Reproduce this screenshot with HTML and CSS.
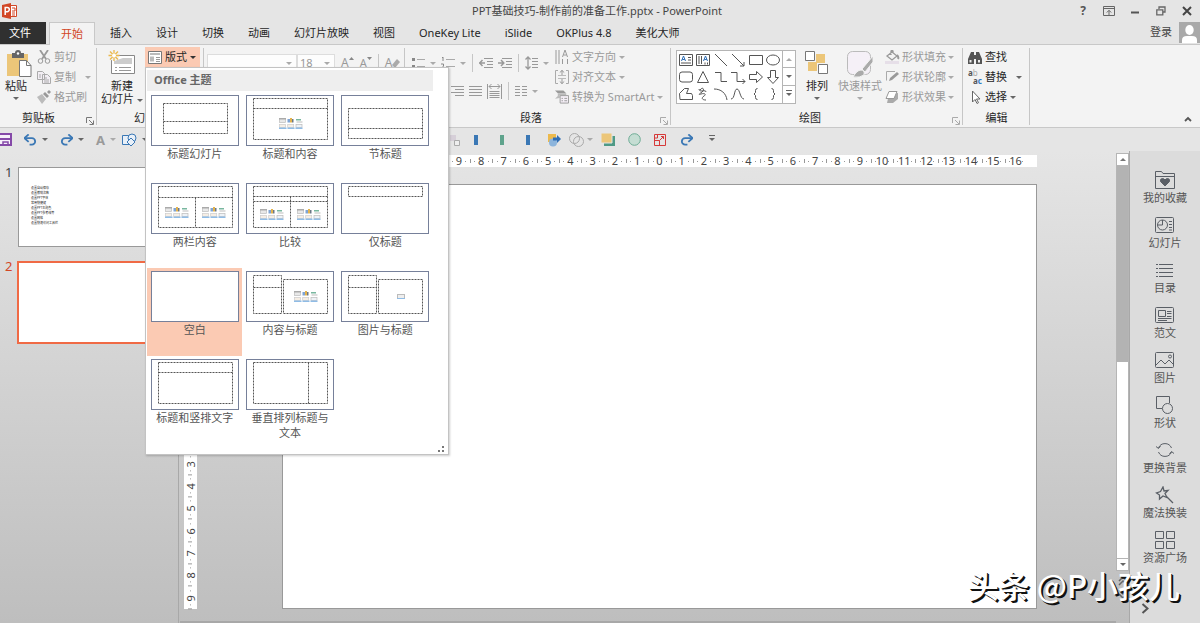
FILE: index.html
```html
<!DOCTYPE html>
<html lang="zh-CN">
<head>
<meta charset="utf-8">
<title>PPT基础技巧-制作前的准备工作.pptx - PowerPoint</title>
<link rel="stylesheet" href="styles.css">
</head>
<body>
<svg class="defs" aria-hidden="true">
  <symbol id="media" viewBox="0 0 24 11">
    <rect x=".5" y=".5" width="6" height="4" fill="#e8e8e8" stroke="#bbb" stroke-width=".7"/><rect x="0" y="0" width="7" height="1.500" fill="#aaa"/>
    <rect x="8.500" y="1" width="2.500" height="3.500" fill="#7fa4d4"/><rect x="11" y="0" width="2" height="4.500" fill="#e3b34d"/><rect x="13" y="1" width="1.500" height="3.500" fill="#6b7686"/>
    <rect x="17" y="1" width="5" height="1.500" fill="#79b79f"/><rect x="17.500" y="3.500" width="6" height="1" fill="#bbb"/>
    <rect x=".5" y="6.500" width="6" height="3" fill="#f6eee4" stroke="#ccc" stroke-width=".7"/><rect y="9.500" width="7.500" height="1.500" fill="#8fbce6"/>
    <rect x="8.700" y="6.500" width="6" height="3" fill="#f6eee4" stroke="#ccc" stroke-width=".7"/><rect x="8.500" y="9.500" width="7" height="1.500" fill="#8fbce6"/>
    <rect x="17" y="6.500" width="6" height="3" fill="#eef2f6" stroke="#bbb" stroke-width=".7"/><rect x="16.500" y="9.500" width="7" height="1.500" fill="#8fbce6"/>
  </symbol>
  <symbol id="launch" viewBox="0 0 8 8"><path d="M.5 6V.5H6M3 3l4 4M7.500 3.500v4h-4" fill="none" stroke="currentColor"/></symbol>
  <symbol id="redo" viewBox="0 0 14 12"><path d="M13 4H5.500a3.500 3.500 0 0 0 0 7H8" fill="none" stroke="#3b78b5" stroke-width="2"/><path d="M9 0l4.500 4L9 8" fill="none" stroke="#3b78b5" stroke-width="2"/></symbol>
</svg>

<header class="titlebar">
  <svg class="logo" width="16" height="16" viewBox="0 0 16 16"><path d="M8 2.500h6.500v11H8z" fill="#fff" stroke="#d24726"/><path d="M10 5h3v3h-3M10 10h3M10 12h3" stroke="#d24726" fill="none"/><path d="M0 2l9-2v16l-9-2z" fill="#d24726"/><path d="M3.200 12V4.500h2a2 2 0 0 1 0 4.200h-2" fill="none" stroke="#fff" stroke-width="1.500"/></svg>
  <h1>PPT基础技巧-制作前的准备工作.pptx - PowerPoint</h1>
  <div class="window-buttons">
    <button class="help" aria-label="帮助">?</button>
    <button aria-label="功能区显示选项"><svg width="12" height="10" viewBox="0 0 12 10"><path d="M.5.5h11v9H.5zM.5 2.500h11M6 9V4.500M3.800 6.500L6 4.300l2.200 2.200" fill="none" stroke="#666"/></svg></button>
    <button aria-label="最小化"><svg width="10" height="10" viewBox="0 0 10 10"><path d="M1 6.500h8" stroke="#555" stroke-width="2"/></svg></button>
    <button aria-label="还原"><svg width="10" height="10" viewBox="0 0 10 10"><path d="M3 3V1h6v5H7M.8 3.800h6v5h-6z" fill="none" stroke="#666" stroke-width="1.300"/></svg></button>
    <button aria-label="关闭"><svg width="10" height="10" viewBox="0 0 10 10"><path d="M1 1l8 8M9 1L1 9" stroke="#444" stroke-width="2"/></svg></button>
  </div>
</header>

<nav class="tabs">
  <button class="file">文件</button>
  <button class="active">开始</button>
  <button>插入</button><button>设计</button><button>切换</button><button>动画</button><button>幻灯片放映</button><button>视图</button><button>OneKey Lite</button><button>iSlide</button><button>OKPlus 4.8</button><button>美化大师</button>
  <a class="login" href="#">登录</a>
  <svg class="avatar" width="21" height="21" viewBox="0 0 21 21"><path d="M0 0h21v21H0z" fill="#a9a9a9"/><ellipse cx="10.500" cy="8" rx="4.200" ry="5" fill="#fff"/><path d="M3 21v-3q0-4 5-4h5q5 0 5 4v3z" fill="#fff"/></svg>
</nav>

<section class="ribbon">
  <div class="group clipboard">
    <div class="body">
      <button class="big paste"><svg width="28" height="29" viewBox="0 0 28 29"><path d="M1 4h21v22H1z" fill="#ecc679"/><path d="M6 3h3a3 3 0 0 1 6 0h3v5H6z" fill="#666"/><circle cx="12" cy="3.500" r="1.200" fill="#fff"/><path d="M13.500 10.500h7l4.500 5v11H13.500z" fill="#fff" stroke="#777"/><path d="M20.500 10.500v5H25" fill="none" stroke="#777"/></svg><span>粘贴</span><i class="caret"></i></button>
      <div class="rows off">
        <button><svg width="14" height="14" viewBox="0 0 14 14" fill="none" stroke="#999"><path d="M3 0l6 9M11 0L5 9" stroke-width="1.800"/><circle cx="3.500" cy="11" r="2.300"/><circle cx="10.500" cy="11" r="2.300"/></svg>剪切</button>
        <button><svg width="14" height="14" viewBox="0 0 14 14" fill="#f2eef4" stroke="#aaa"><path d="M.5 1.500h5l2 2v6h-7zM5.500 4.500h5l3 3v6h-8z"/><path d="M2 5h2M2 7h2M7 8h3M7 10h5M7 12h5"/></svg>复制<i class="caret far"></i></button>
        <button><svg width="14" height="14" viewBox="0 0 14 14"><path d="M0 7l5-3 4 5-4 5z" fill="#bbb"/><path d="M6 4l2-2 4 4-2 2zM10 2l2-2 2 2-2 2z" fill="#999"/></svg>格式刷</button>
      </div>
    </div>
    <footer>剪贴板<button aria-label="剪贴板选项"><svg width="8" height="8"><use href="#launch"/></svg></button></footer>
  </div>

  <div class="group slides">
    <div class="body">
      <button class="big new"><svg width="28" height="26" viewBox="0 0 28 26"><path d="M3.500 5.500h23v18h-23z" fill="#fff" stroke="#888"/><path d="M15 8h9v6H6v-3" fill="#ccc"/><path d="M7 17.500h2M11 17.500h12M7 20.500h2M11 20.500h12" stroke="#999"/><circle cx="6" cy="6" r="5" fill="#f2f2f2"/><path d="M6 0v11M.5 5.500h11M2 1.500l8 8M10 1.500l-8 8" stroke="#ecb94c" stroke-width="1.300"/><circle cx="6" cy="5.500" r="2" fill="#fff"/></svg><span>新建<br>幻灯片 <i class="caret"></i></span></button>
      <button class="layout-button" aria-expanded="true"><svg width="14" height="13" viewBox="0 0 14 13"><path d="M.5.5h13v12H.5z" fill="#fff" stroke="#777"/><path d="M2 2h10v2H2zM2 5.500h4v5H2z" fill="#bbb"/><path d="M8 6.500h4M8 8.500h4M8 10.500h4" stroke="#999"/></svg>版式<i class="caret"></i></button>
    </div>
    <footer>幻灯片</footer>
  </div>

  <div class="group font">
    <div class="tools off">
      <span class="combo name"><select aria-label="字体"><option></option></select><i class="caret"></i></span><span class="combo size"><select aria-label="字号"><option>18</option></select><i class="caret"></i></span>
      <button aria-label="增大字号">A<svg width="5" height="14" viewBox="0 0 5 14"><path d="M0 4l2.500-3L5 4z" fill="#888"/></svg></button>
      <button class="less" aria-label="减小字号">A<svg width="5" height="14" viewBox="0 0 5 14"><path d="M0 1l2.500 3L5 1z" fill="#888"/></svg></button>
      <i class="rule"></i>
      <button class="clear" aria-label="清除格式">A<svg width="8" height="12" viewBox="0 0 8 12"><path d="M0 8l5-6 3 3-5 6z" fill="#aaa"/></svg></button>
    </div>
  </div>

  <div class="group paragraph">
    <div class="body">
      <div class="para-tools off">
        <div class="tools">
          <button aria-label="项目符号"><svg width="13" height="11" viewBox="0 0 13 11" stroke="#aaa"><path d="M0 1.500h3M0 8.500h3" stroke="#888" stroke-width="3"/><path d="M5 1.500h8M5 8.500h8"/></svg></button><i class="caret"></i>
          <button aria-label="编号"><svg width="14" height="13" viewBox="0 0 14 13" stroke="#aaa"><path d="M1 1l1-1v4M0 7h2.500v2L.5 11.500H3" fill="none" stroke="#888"/><path d="M5 2.500h9M5 9.500h9"/></svg></button><i class="caret"></i>
          <i class="rule"></i>
          <button aria-label="减少缩进"><svg width="14" height="11" viewBox="0 0 14 11" fill="none" stroke="#999"><path d="M0 5h6M3.500 2L.7 5l2.800 3" stroke-width="1.500"/><path d="M5 .5h9M8 3.500h6M8 6.500h6M5 9.500h9"/></svg></button>
          <button aria-label="增加缩进"><svg width="14" height="11" viewBox="0 0 14 11" fill="none" stroke="#999"><path d="M0 5h6M3 2l2.800 3L3 8" stroke-width="1.500"/><path d="M4 .5h10M8 3.500h6M8 6.500h6M4 9.500h10"/></svg></button>
          <i class="rule"></i>
          <button aria-label="行距"><svg width="13" height="14" viewBox="0 0 13 14" fill="none" stroke="#999"><path d="M3 1v12M.5 3.500L3 1l2.500 2.500M.5 10.500L3 13l2.500-2.500" stroke-width="1.300"/><path d="M7 2.500h6M7 5.500h6M7 8.500h6M7 11.500h6"/></svg></button><i class="caret"></i>
        </div>
        <div class="tools second">
          <button aria-label="右对齐"><svg width="14" height="11" viewBox="0 0 14 11" stroke="#999"><path d="M1 .5h13M5 3.500h9M1 6.500h13M5 9.500h9"/></svg></button>
          <button aria-label="两端对齐"><svg width="13" height="11" viewBox="0 0 13 11" stroke="#999"><path d="M0 .5h13M0 3.500h13M0 6.500h13M0 9.500h13"/></svg></button>
          <button aria-label="分散对齐"><svg width="15" height="15" viewBox="0 0 15 15" fill="none" stroke="#999"><path d="M.5 0v15M14.500 0v15M2 2.500h11M4.500 0L2 2.500 4.500 5M10.500 0L13 2.500 10.500 5M2.500 7.500h10M2.500 9.500h10M2.500 11.500h10M2.500 13.500h10"/></svg></button>
          <i class="rule"></i>
          <button aria-label="分栏"><svg width="12" height="11" viewBox="0 0 12 11" stroke="#999"><path d="M0 .5h5M0 3.500h5M0 6.500h5M0 9.500h5M7 .5h5M7 3.500h5M7 6.500h5M7 9.500h5"/></svg></button><i class="caret"></i>
        </div>
      </div>
      <div class="rows off">
        <button><svg width="14" height="14" viewBox="0 0 14 14" fill="none" stroke="#999"><path d="M1 0v14M4 0v14M7.500 9v5M12.500 9v5M7.500 7l2.500-7 2.500 7M8.500 5h3"/></svg>文字方向<i class="caret"></i></button>
        <button><svg width="14" height="14" viewBox="0 0 14 14" fill="none" stroke="#999"><path d="M3 .5H.5v13H3M11 .5h2.500v13H11" stroke="#aaa"/><path d="M3 5.500h8M3 8.500h8" stroke="#bbb"/><path d="M7 0v5M4.800 2.500L7 .5l2.200 2M7 9v5M4.800 11.500l2.200 2 2.200-2"/></svg>对齐文本<i class="caret"></i></button>
        <button><svg width="14" height="14" viewBox="0 0 15 14"><path d="M0 0h9l3 3H3z" fill="#999"/><path d="M3 3h9v2H5v3L0 9l3-3z" fill="#bbb"/><path d="M5.500 5.500h9v8h-9z" fill="#f5eff7" stroke="#999"/><path d="M7 8.500h1.500M10 8.500h3M7 11h1.500M10 11h3" stroke="#999"/></svg>转换为 SmartArt<i class="caret"></i></button>
      </div>
    </div>
    <footer>段落<button class="off" aria-label="段落选项"><svg width="8" height="8"><use href="#launch"/></svg></button></footer>
  </div>

  <div class="group drawing">
    <div class="body">
      <div class="gallery">
        <div class="shapes">
          <svg viewBox="0 0 16 16"><path d="M1.500 2.500h13v11h-13zM10 5.500h3M10 8h3M3 11h10"/><path d="M3.500 9l2-5 2 5M4.300 7.500h2.500" stroke="#2f6eb5"/></svg>
          <svg viewBox="0 0 16 16"><path d="M1.500 2.500h13v11h-13zM4 4v8M6.500 4v8M10 10.500v2M12.500 10.500v2"/><path d="M8.500 9l2-5 2 5M9.300 7.500h2.500" stroke="#2f6eb5"/></svg>
          <svg viewBox="0 0 16 16"><path d="M2 2l12 12"/></svg>
          <svg viewBox="0 0 16 16"><path d="M2 2l12 12M14 10v4h-4"/></svg>
          <svg viewBox="0 0 16 16"><path d="M1.500 3.500h13v9h-13z"/></svg>
          <svg viewBox="0 0 16 16"><ellipse cx="8" cy="8" rx="6.500" ry="5"/></svg>
          <svg viewBox="0 0 16 16"><rect x="1.500" y="3" width="13" height="10" rx="2.500"/></svg>
          <svg viewBox="0 0 16 16"><path d="M8 2.500l5.500 11h-11z"/></svg>
          <svg viewBox="0 0 16 16"><path d="M2 3.500h6v9h6"/></svg>
          <svg viewBox="0 0 16 16"><path d="M1 3.500h6v9h8M12.500 10l2.500 2.500-2.500 2.500"/></svg>
          <svg viewBox="0 0 16 16"><path d="M1.500 5.500h7v-3L14.500 8l-6 5.500v-3h-7z"/></svg>
          <svg viewBox="0 0 16 16"><path d="M5.500 1.500v7h-3L8 14.500l5.500-6h-3v-7z"/></svg>
          <svg viewBox="0 0 16 16"><path d="M2 13.500l-.5-6 5-5h4l-2 5h5l1 2v4z"/></svg>
          <svg viewBox="0 0 16 16"><path d="M5 4c3-4 5 0 2 2S3 9 6 8s6 0 3 2-2 4 2 4M4 3c0 4 7 0 7 3"/></svg>
          <svg viewBox="0 0 16 16"><path d="M1 3c7 0 12 4 13 11"/></svg>
          <svg viewBox="0 0 16 16"><path d="M1 13C5 13 4 3 7 3s3 10 7 10"/></svg>
          <svg viewBox="0 0 16 16"><path d="M9.500 2.500q-2 0-2 2v2L6 8l1.500 1.500v2q0 2 2 2"/></svg>
          <svg viewBox="0 0 16 16"><path d="M6.500 2.500q2 0 2 2v2L10 8 8.500 9.500v2q0 2-2 2"/></svg>
        </div>
        <div class="gallery-nav">
          <button aria-label="上一行"><i class="caret up pale"></i></button>
          <button aria-label="下一行"><i class="caret"></i></button>
          <button aria-label="更多"><i class="caret more"></i></button>
        </div>
      </div>
      <button class="big arrange"><svg width="26" height="26" viewBox="0 0 26 26"><path d="M12 4h9v9h-9zM4 12h9v9H4z" fill="#ecc679"/><path d="M1.500 1.500h9v9h-9zM14.500 14.500h9v9h-9z" fill="#fff" stroke="#777"/></svg><span>排列</span><i class="caret"></i></button>
      <button class="big styles off"><svg width="28" height="28" viewBox="0 0 28 28"><rect x="1.500" y="1.500" width="23" height="23" rx="5" fill="#f5f0f7" stroke="#bbb"/><path d="M27 6v6l-8 10-3-3z" fill="#aaa" stroke="#f3f3f3"/><path d="M7 27q4-7 8-7t3 5q-4 3-11 2z" fill="#aaa" stroke="#f3f3f3"/></svg><span>快速样式</span><i class="caret"></i></button>
      <div class="rows off">
        <button><svg width="15" height="14" viewBox="0 0 15 14" fill="none" stroke="#999"><path d="M0 11h14v3H0z" fill="#e6dfe8" stroke="none"/><path d="M2 6l5-4 5 4-5 4zM6 5V1q1-1 2 0v3" stroke-width="1.300"/><path d="M12 5q2 2 1 4" stroke-width="2"/></svg>形状填充<i class="caret"></i></button>
        <button><svg width="15" height="14" viewBox="0 0 15 14" fill="none" stroke="#aaa"><path d="M10 1.500H1.500v9"/><path d="M4 11l1-3 7-6 2 2-7 6z" fill="#999" stroke="none"/></svg>形状轮廓<i class="caret"></i></button>
        <button><svg width="15" height="14" viewBox="0 0 15 14"><path d="M4 4l9-1v6l-5 4H2z" fill="#aaa"/><path d="M4 1.500h8l-3 7H1z" fill="#fff" stroke="#999" stroke-linejoin="round"/></svg>形状效果<i class="caret"></i></button>
      </div>
    </div>
    <footer>绘图<button class="off" aria-label="绘图选项"><svg width="8" height="8"><use href="#launch"/></svg></button></footer>
  </div>

  <div class="group editing">
    <div class="body">
      <div class="rows">
        <button><svg width="14" height="13" viewBox="0 0 14 13" fill="#555"><path d="M3 1h3v12H0V8zM8 1h3l3 7v5H8zM6 4h2v4H6z"/><path d="M1.500 9h2v2.500h-2zM10 9h2v2.500h-2z" fill="#eee"/></svg>查找</button>
        <button><span class="replace-icon" aria-hidden="true"><span><b>a</b><i>b</i></span><span><b>a</b><em>c</em></span></span>替换<i class="caret far"></i></button>
        <button><svg width="14" height="14" viewBox="0 0 14 14"><path d="M4.500 1v11l2.500-2.500 2 4 1.500-.8-2-3.700H12z" fill="#fff" stroke="#666"/></svg>选择<i class="caret"></i></button>
      </div>
    </div>
    <footer>编辑</footer>
  </div>
  <button class="collapse" aria-label="折叠功能区"><svg width="8" height="6" viewBox="0 0 8 6"><path d="M1 5l3-3 3 3" fill="none" stroke="#555" stroke-width="1.800"/></svg></button>
</section>

<section class="quickbar">
  <div class="quick-start">
    <button aria-label="保存"><svg width="12" height="13" viewBox="0 0 12 13"><path d="M0 1h11v11H0" fill="#f6effa" stroke="#8549a8" stroke-width="2"/><path d="M0 6h10" stroke="#8549a8" stroke-width="2"/><path d="M3 12V9h5v3" fill="none" stroke="#8549a8" stroke-width="1.500"/></svg></button>
    <button aria-label="撤消"><svg class="flip" width="13" height="12"><use href="#redo"/></svg><i class="caret"></i></button>
    <button aria-label="恢复"><svg width="13" height="12"><use href="#redo"/></svg><i class="caret"></i></button>
    <button class="letter off" aria-label="字体颜色">A<i class="caret"></i></button>
    <button aria-label="形状"><svg width="15" height="14" viewBox="0 0 15 14" fill="#e9f0f8" stroke="#3b78b5"><path d="M.5 2.500h9v9h-9z"/><circle cx="10" cy="5" r="4"/><path d="M9 5l4 4-4 4-4-4z"/></svg><i class="caret"></i></button>
  </div>
  <div class="quick-more">
    <button aria-label="组合"><svg width="14" height="14" viewBox="0 0 14 14"><path d="M1 2h6v6H1z" fill="#d6cfd8"/><path d="M5.500 7.500h5v5h-5z" fill="#eee" stroke="#aaa"/></svg></button>
    <button aria-label="左对齐"><i class="bar"></i></button>
    <button aria-label="居中"><i class="bar green"></i></button>
    <button aria-label="右侧对齐"><i class="bar"></i></button>
    <button aria-label="替换形状"><svg width="14" height="14" viewBox="0 0 14 14"><path d="M1 1h8v8H1z" fill="#ecb94c"/><circle cx="6" cy="9.500" r="4" fill="#8db5dc"/><path d="M6 4.500h4V2l4 4-4 4V7.500H6z" fill="#2f6eb5"/></svg></button>
    <button class="wide" aria-label="合并形状"><svg width="15" height="14" viewBox="0 0 15 14" fill="none" stroke="#aaa"><circle cx="5.500" cy="5.500" r="5"/><circle cx="9.500" cy="8.500" r="5"/></svg><i class="caret pale"></i></button>
    <button aria-label="置底"><svg width="14" height="13" viewBox="0 0 14 13"><path d="M3 3h11v10H3z" fill="#4f9a86"/><path d="M0 0h11v10H0z" fill="#ecc679" stroke="#e5e5e5"/></svg></button>
    <button aria-label="圆"><svg width="13" height="13" viewBox="0 0 13 13"><circle cx="6.500" cy="6.500" r="5.800" fill="#c5ddd3" stroke="#6dac95"/></svg></button>
    <button aria-label="选择窗格"><svg width="12" height="12" viewBox="0 0 12 12" fill="none" stroke="#d63a3a"><path d="M.5.500h11v11H.5z"/><path d="M.5 6.500h5v5M3.500 1v3H1M5.500 6.500l4-4M7 2.500h2.500V5"/></svg></button>
    <button aria-label="重复"><svg width="13" height="12"><use href="#redo"/></svg></button>
    <button aria-label="自定义快速访问工具栏"><i class="caret more"></i></button>
  </div>
</section>

<main class="workspace">
  <aside class="slides-pane">
    <div class="slide-row"><span>1</span><div class="slide"><p>设置自动保存<br>设置撤销次数<br>设置PPT字体<br>常用快捷键<br>设置PPT主题色<br>设置PPT参考线等<br>设置网格<br>设置快速访问工具栏</p></div></div>
    <div class="slide-row current"><span>2</span><div class="slide"></div></div>
  </aside>

  <section class="editor">
    <div class="h-ruler"><span></span><span></span><span></span><span></span><span></span><span></span><span></span><span>9</span><span>8</span><span>7</span><span>6</span><span>5</span><span>4</span><span>3</span><span>2</span><span>1</span><span>0</span><span>1</span><span>2</span><span>3</span><span>4</span><span>5</span><span>6</span><span>7</span><span>8</span><span>9</span><span>10</span><span>11</span><span>12</span><span>13</span><span>14</span><span>15</span><span>16</span></div>
    <div class="v-ruler"><span></span><span></span><span></span><span></span><span></span><span></span><span></span><span></span><span></span><span></span><span></span><span></span><span>3</span><span>4</span><span>5</span><span>6</span><span>7</span><span>8</span><span>9</span></div>
    <div class="page"></div>
  </section>

  <div class="scroll">
    <button aria-label="向上滚动"><i class="caret up"></i></button>
    <div class="track"><div class="thumb"></div></div>
    <button aria-label="向下滚动"><i class="caret"></i></button>
    <div class="jump"><svg width="10" height="22" viewBox="0 0 10 22"><path d="M1 5l4-4 4 4M1 9l4-4 4 4M1 14l4 4 4-4M1 18l4 4 4-4" fill="none" stroke="#666" stroke-width="1.500"/></svg></div>
  </div>

  <aside class="tools-pane">
    <button><svg viewBox="0 0 20 18"><path d="M.5 17.500V.5h6l1.500 2h11.500v15zM.5 5.500h19"/><path d="M10 15L5.500 10.500Q5 7.500 7.500 7.500 9 7.500 10 9q1-1.500 2.500-1.500 2.500 0 2 3z" fill="#5a5f66"/></svg>我的收藏</button>
    <button><svg viewBox="0 0 20 18"><rect x=".5" y="1.500" width="18" height="15" rx="1"/><circle cx="7.500" cy="9" r="5"/><path d="M7.500 4v5h-5M14 5.500h3M14 8.500h3M14 11.500h3M14 14h3"/></svg>幻灯片</button>
    <button><svg viewBox="0 0 20 18"><path d="M4 3.500h14M4 7.500h14M4 11.500h14M4 15.500h14M1 3.500h2M1 7.500h2M1 11.500h2M1 15.500h2"/></svg>目录</button>
    <button><svg viewBox="0 0 20 18"><rect x=".5" y="1.500" width="18" height="15" rx="1"/><path d="M3.500 4.500h7v6h-7zM12 5.500h4.500M12 7.500h4.500M12 10.500h4.500M3 12.500h13.500M3 14.500h9"/></svg>范文</button>
    <button><svg viewBox="0 0 20 18"><rect x=".5" y="1.500" width="18" height="15" rx="1"/><path d="M1 14l5-5 4 4 4-4 5 5"/><circle cx="15" cy="5.500" r="1.500"/></svg>图片</button>
    <button><svg viewBox="0 0 20 18"><path d="M7 12.500H1.500V.5h13V7"/><circle cx="12.500" cy="12.500" r="5"/></svg>形状</button>
    <button><svg viewBox="0 0 20 18"><path d="M3.500 7a7 7 0 0 1 13 0M3.500 11a7 7 0 0 0 13 0M1 5.500l2.500 2 2-2.500M19 12.500l-2.500-2-2 2.500"/></svg>更换背景</button>
    <button><svg viewBox="0 0 20 18"><path d="M8 1l1 4 4-.5-3 3 2 4-4-1.500-3.500 3V9L1.500 7l4-1.500zM11.500 10.500l6.500 6.500" stroke-width="1.300"/></svg>魔法换装</button>
    <button><svg viewBox="0 0 20 18"><path d="M.5.500h8v7h-8zM11.500.500h8v7h-8zM.5 10.500h8v7h-8zM11.500 10.500h8v7h-8z"/></svg>资源广场</button>
    <svg class="next" width="8" height="11" viewBox="0 0 8 11"><path d="M1.500 1l5 4.500-5 4.500" fill="none" stroke="#555" stroke-width="2"/></svg>
  </aside>
</main>

<div class="layout-menu" role="menu">
  <h2>Office 主题</h2>
  <div class="layouts">
    <button><svg viewBox="0 0 88 51"><path d="M12.500 8.500h64v30h-64zM12.500 26.500h64"/></svg>标题幻灯片</button>
    <button><svg viewBox="0 0 88 51"><path d="M7.500 3.500h74v41h-74zM7.500 13.500h74"/><use href="#media" x="33" y="23" width="24" height="11"/></svg>标题和内容</button>
    <button><svg viewBox="0 0 88 51"><path d="M7.500 13.500h74v30h-74zM7.500 33.500h74"/></svg>节标题</button>
    <button><svg viewBox="0 0 88 51"><path d="M7.500 3.500h74v41h-74zM7.500 14.500h74M44.500 14.500v30"/><use href="#media" x="14" y="24" width="24" height="11"/><use href="#media" x="51" y="24" width="24" height="11"/></svg>两栏内容</button>
    <button><svg viewBox="0 0 88 51"><path d="M7.500 3.500h74v41h-74zM7.500 13.500h74M7.500 18.500h74M44.500 13.500v31"/><use href="#media" x="14" y="26" width="24" height="11"/><use href="#media" x="51" y="26" width="24" height="11"/></svg>比较</button>
    <button><svg viewBox="0 0 88 51"><path d="M7.500 3.500h74v10h-74z"/></svg>仅标题</button>
    <button class="selected"><svg viewBox="0 0 88 51"></svg>空白</button>
    <button><svg viewBox="0 0 88 51"><path d="M7.500 4.500h28v38h-28zM7.500 16.500h28M37.500 8.500h44v34h-44z"/><use href="#media" x="48" y="20" width="24" height="11"/></svg>内容与标题</button>
    <button><svg viewBox="0 0 88 51"><path d="M7.500 4.500h28v38h-28zM7.500 16.500h28M37.500 8.500h44v34h-44z"/><g><rect x="56.500" y="23.500" width="7" height="4" fill="#eee" stroke="#bbb"/><rect x="56" y="27" width="8" height="1" fill="#8fbce6"/></g></svg>图片与标题</button>
    <button><svg viewBox="0 0 88 51"><path d="M7.500 3.500h74v41h-74zM7.500 13.500h74"/></svg>标题和竖排文字</button>
    <button><svg viewBox="0 0 88 51"><path d="M7.500 3.500h74v41h-74zM62.500 3.500v41"/></svg>垂直排列标题与文本</button>
  </div>
  <svg class="grip" width="6" height="6" viewBox="0 0 6 6"><path d="M4 0h2v2H4zM0 4h2v2H0zM4 4h2v2H4z" fill="#777"/></svg>
</div>

<div class="watermark">头条 @P小孩儿</div>
</body>
</html>
```

FILE: styles.css
```css
* { box-sizing: border-box; }

body {
  margin: 0;
  min-height: 100vh;
  display: flex;
  flex-direction: column;
  position: relative;
  background: #e5e5e5;
  color: #262626;
  font: 11px/14px "Noto Sans", "Noto Sans CJK SC", sans-serif;
}

button {
  border: 0;
  padding: 0;
  background: none;
  color: inherit;
  font: inherit;
  white-space: nowrap;
}

svg { flex: none; }
.defs { position: absolute; width: 0; height: 0; }
.off { color: #9a9a9a; }
.flip { transform: scaleX(-1); }

.caret {
  flex: none;
  display: inline-block;
  border: 3px solid transparent;
  border-top-color: #666;
  border-bottom: 0;
  vertical-align: middle;
}
.off .caret, .caret.pale { border-top-color: #aaa; }
.caret.up { border-top: 0; border-bottom: 3px solid #777; }
.caret.up.pale { border-bottom-color: #aaa; }
.caret.more { position: relative; }
.caret.more::before {
  content: "";
  position: absolute;
  left: -3px;
  top: -6px;
  width: 6px;
  height: 1px;
  background: #666;
}

/* Title bar */
.titlebar {
  height: 22px;
  display: grid;
  grid-template-columns: 1fr auto 1fr;
  align-items: center;
  padding-left: 2px;
}
h1 { margin: 0; padding-right: 8px; font-size: 11px; font-weight: 400; color: #444; }
.window-buttons { display: flex; justify-content: flex-end; }
.window-buttons button { width: 26px; height: 20px; display: grid; place-items: center; }
.window-buttons .help { font-size: 12px; font-weight: 700; color: #555; }

/* Tabs */
.tabs { display: flex; height: 22px; }
.tabs button { padding: 0 12px; }
.tabs .file { width: 46px; margin-right: 3px; padding: 0 6px 0 0; background: #303030; color: #fff; }
.tabs .active {
  z-index: 1;
  margin: 0 3px -1px 0;
  height: 23px;
  padding: 0 11px;
  border: 1px solid #c8c8c8;
  border-bottom: 0;
  background: #f3f3f3;
  color: #d24726;
}
.login { margin: 3px 7px 0 auto; color: #444; text-decoration: none; }

/* Ribbon */
.ribbon {
  display: flex;
  height: 84px;
  border: solid #c8c8c8;
  border-width: 1px 0;
  background: #f3f3f3;
}
.group { flex: none; display: flex; flex-direction: column; position: relative; padding: 2px 0; }
.group::after {
  content: "";
  position: absolute;
  right: 0;
  top: 3px;
  bottom: 2px;
  width: 1px;
  background: #c6c6c6;
}
.body { flex: 1; display: flex; align-items: flex-start; }
.group footer { position: relative; height: 14px; text-align: center; }
.group footer button { position: absolute; right: 3px; bottom: 0; height: 8px; display: flex; color: #777; }
.group footer button.off { color: #aaa; }

.clipboard { width: 97px; }
.clipboard footer { padding-right: 20px; }
.slides { width: 107px; }
.font { width: 201px; }
.paragraph { width: 266px; }
.drawing { width: 292px; }
.paragraph footer, .drawing footer { padding-right: 14px; }
.editing { width: 67px; }

.big { display: flex; flex-direction: column; align-items: center; padding-top: 3px; }
.big span { line-height: 13px; }
.big > .caret { margin-top: 5px; }
.paste { width: 37px; }
.paste svg { margin-left: 2px; }
.paste span, .paste .caret { margin-right: 5px; }
.new { width: 48px; padding-left: 2px; }
.new span { margin-top: 3px; }
.layout-button { display: flex; align-items: center; gap: 3px; height: 20px; width: 55px; padding-left: 3px; background: #fbcab3; }
.layout-button .caret { border-top-color: #333; }

.rows { display: grid; grid-auto-rows: 20px; }
.rows button { display: flex; align-items: center; gap: 3px; }
.rows .far { margin-left: 6px; }

.tools { display: flex; align-items: center; height: 32px; }
.tools button { display: flex; align-items: center; }
.rule { flex: none; width: 1px; height: 18px; background: #c6c6c6; }
.font .tools { gap: 6px; padding-left: 3px; }
.combo { flex: none; display: flex; align-items: center; height: 18px; padding-right: 4px; border: 1px solid #ddd; background: #fdfdfd; }
.combo.name { width: 90px; margin-right: -6px; }
.combo.size { width: 38px; }
.combo select { flex: 1; min-width: 0; appearance: none; border: 0; padding: 0 2px; background: none; color: #999; font: inherit; }
.tools button { font-size: 12px; }
.tools .less { font-size: 11px; }

.para-tools { width: 150px; }
.para-tools .tools { gap: 5px; padding-left: 7px; }
.para-tools .rule { margin: 0 1px; }
.para-tools .second { height: 24px; padding-left: 45px; }

.drawing .body { padding-left: 5px; }
.gallery { display: flex; width: 120px; height: 54px; margin-top: 3px; border: 1px solid #b5b5b5; background: #fff; }
.shapes { flex: 1; display: grid; grid-template: repeat(3, 1fr) / repeat(6, 1fr); place-items: center; }
.shapes svg { width: 16px; height: 16px; fill: none; stroke: #555; }
.gallery-nav { width: 13px; display: grid; grid-template-rows: repeat(3, 1fr); }
.gallery-nav button { display: grid; place-items: center; border: solid #b5b5b5; border-width: 0 0 1px 1px; }
.gallery-nav button:last-child { border-bottom: 0; }
.arrange { width: 42px; }
.arrange svg { margin-bottom: 3px; }
.styles { width: 44px; }
.styles svg { margin-bottom: 1px; }
.drawing .rows { margin-left: 3px; }
.drawing .rows button { gap: 2px; }

.editing .body { padding-left: 5px; }
.replace-icon { width: 14px; display: flex; flex-direction: column; align-items: flex-start; font-size: 8px; line-height: 8px; color: #555; }
.replace-icon span:last-child { align-self: flex-end; }
.replace-icon i { font-style: normal; color: #aaa; }
.replace-icon em { font-style: normal; font-weight: 700; color: #2f7bc4; }
.collapse { margin: auto 8px 2px auto; }

/* Quick access bar */
.quickbar { display: flex; height: 23px; }
.quickbar button { display: flex; align-items: center; }
.quick-start { flex: none; display: flex; gap: 12px; width: 449px; }
.quick-start button { gap: 5px; }
.quick-start .letter { margin-right: -6px; font-size: 13px; font-weight: 700; }
.quick-more { display: flex; }
.quick-more button { width: 26px; justify-content: center; }
.quick-more button:first-child { width: 14px; justify-content: flex-start; }
.quick-more .wide { width: 28px; gap: 3px; }
.bar { width: 4px; height: 10px; background: #3b78b5; }
.bar.green { background: #5fa38c; }

/* Workspace */
.workspace { flex: 1; display: flex; background: linear-gradient(#e5e5e5, #bebebe); }
.slides-pane { flex: none; width: 179px; padding-top: 16px; border-right: 1px solid #a8a8a8; }
.slide-row { display: flex; gap: 5px; padding-left: 5px; margin-bottom: 14px; font-size: 13px; line-height: 10px; color: #444; }
.slide-row span { width: 8px; }
.slide { width: 142px; height: 80px; padding: 18px 12px; border: 1px solid #999; background: #fff; }
.slide p { margin: 0; font-size: 3px; line-height: 5px; color: #222; }
.current { color: #d24726; }
.current .slide { width: 144px; height: 83px; margin-left: -1px; border: 2px solid #f06a45; }

.editor {
  flex: 1;
  display: grid;
  grid-template: 12px 1fr / 13px 1fr;
  gap: 17px 85px;
  margin-left: 1px;
  padding: 4px 79px 12px 4px;
  border-bottom: 2px solid #a8a8a8;
}
.h-ruler { grid-column: 2; display: flex; padding: 0 10px; background: #fff; color: #444; line-height: 12px; }
.h-ruler span, .v-ruler span { flex: 1; min-width: 0; min-height: 0; display: flex; justify-content: center; align-items: center; }
.h-ruler span {
  background:
    linear-gradient(#999, #999) 0 50% / 1px 4px no-repeat,
    linear-gradient(#999, #999) 20% 50% / 1px 1px no-repeat,
    linear-gradient(#999, #999) 82% 50% / 1px 1px no-repeat;
}
.v-ruler { display: flex; flex-direction: column; background: #fff; color: #444; }
.v-ruler span {
  writing-mode: vertical-rl;
  transform: rotate(180deg);
  line-height: 13px;
  background:
    linear-gradient(#999, #999) 50% 0 / 4px 1px no-repeat,
    linear-gradient(#999, #999) 50% 20% / 1px 1px no-repeat,
    linear-gradient(#999, #999) 50% 82% / 1px 1px no-repeat;
}
.page { border: 1px solid #999; background: #fff; }

.scroll { flex: none; width: 13px; display: flex; flex-direction: column; padding-top: 2px; }
.scroll button { display: grid; place-items: center; height: 13px; border: 1px solid #b5b5b5; background: #fff; }
.track { flex: 1; border: solid #b5b5b5; border-width: 0 1px; background: #fff; }
.thumb { height: 50%; background: #b3b3b3; }
.jump { height: 52px; padding: 5px 2px; }

.tools-pane {
  flex: none;
  width: 71px;
  display: flex;
  flex-direction: column;
  align-items: center;
  padding-top: 20px;
  border-left: 1px solid #a8a8a8;
  background: #dcdcdc;
  color: #555;
}
.tools-pane button { display: flex; flex-direction: column; align-items: center; height: 45px; }
.tools-pane button svg { width: 20px; height: 18px; margin-bottom: 2px; fill: none; stroke: #5a5f66; }
.tools-pane .next { margin: 27px 51px 0 0; align-self: flex-end; }

/* Layout menu */
.layout-menu {
  position: absolute;
  z-index: 2;
  left: 145px;
  top: 67px;
  width: 304px;
  height: 388px;
  padding: 2px 15px 0 1px;
  border: 1px solid #c3c3c3;
  background: #fff;
  box-shadow: 1px 1px 2px #0003;
}
h2 { margin: 0; padding: 0 7px 1px; background: #eee; color: #666; font-size: 11px; line-height: 20px; }
.layouts { display: grid; grid-template-columns: repeat(3, minmax(0, 1fr)); grid-auto-rows: 88px; padding-top: 1px; color: #555; }
.layouts button { display: flex; flex-direction: column; align-items: center; padding: 3px 8px 0; line-height: 15px; white-space: normal; }
.layouts svg { width: 88px; height: 51px; margin: 0 -5px; outline: 1px solid #76809a; outline-offset: -1px; background: #fff; fill: none; }
.layouts path { stroke: #555; stroke-dasharray: 2 1; }
.layouts .selected { background: #fbcab3; }
.grip { position: absolute; right: 4px; bottom: 2px; }

.watermark {
  position: absolute;
  z-index: 3;
  right: 20px;
  bottom: 18px;
  color: #fff;
  font: 500 31px/40px "Noto Sans CJK SC", sans-serif;
  text-shadow: 1px 1px #111, 2px 2px #111;
}
```
